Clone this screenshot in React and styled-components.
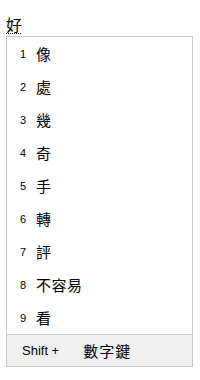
import React from 'react'
import styled, { createGlobalStyle } from 'styled-components'

const GlobalStyle = createGlobalStyle`
  html, body {
    margin: 0;
    padding: 0;
    background: #ffffff;
  }
  body {
    font-family: "Liberation Sans", "Noto Sans CJK TC", sans-serif;
    color: #000;
  }
`

const candidates = ['像', '處', '幾', '奇', '手', '轉', '評', '不容易', '看']

const Page = styled.div`
  width: 200px;
  height: 380px;
  padding: 16px 0 0 6px;
  box-sizing: border-box;
`

const Composition = styled.div`
  height: 20px;
  font-family: "Noto Sans CJK TC", sans-serif;
  font-size: 16px;
  line-height: 17px;
  span {
    display: inline-block;
    height: 18px;
    background-image: linear-gradient(to right, #000 50%, transparent 50%);
    background-size: 2px 1px;
    background-repeat: repeat-x;
    background-position: left bottom;
  }
`

const Panel = styled.div`
  width: 187px;
  box-sizing: border-box;
  border: 1px solid #c9c9c9;
  background: #fff;
`

const List = styled.div`
  display: flex;
  flex-direction: column;
`

const Row = styled.div`
  height: 33px;
  display: flex;
  align-items: center;
  padding-left: 13px;
`

const Index = styled.span`
  width: 16px;
  font-family: "Liberation Sans", sans-serif;
  font-size: 11px;
`

const Word = styled.span`
  font-family: "Noto Sans CJK TC", sans-serif;
  font-size: 15px;
  letter-spacing: 0.5px;
`

const Footer = styled.div`
  height: 31px;
  border-top: 1px solid #c9c9c9;
  background: #f0f0f0;
  display: flex;
  align-items: center;
  padding-left: 15px;
  gap: 24px;
  font-size: 13px;
`

const Hint = styled.span`
  font-family: "Liberation Sans", sans-serif;
`

const Keys = styled.span`
  font-family: "Noto Sans CJK TC", sans-serif;
  font-size: 15px;
  letter-spacing: 1px;
`

export default function App() {
  return (
    <Page>
      <GlobalStyle />
      <Composition><span>好</span></Composition>
      <Panel>
        <List>
          {candidates.map((c, i) => (
            <Row key={i}>
              <Index>{i + 1}</Index>
              <Word>{c}</Word>
            </Row>
          ))}
        </List>
        <Footer>
          <Hint>Shift +</Hint>
          <Keys>數字鍵</Keys>
        </Footer>
      </Panel>
    </Page>
  )
}
